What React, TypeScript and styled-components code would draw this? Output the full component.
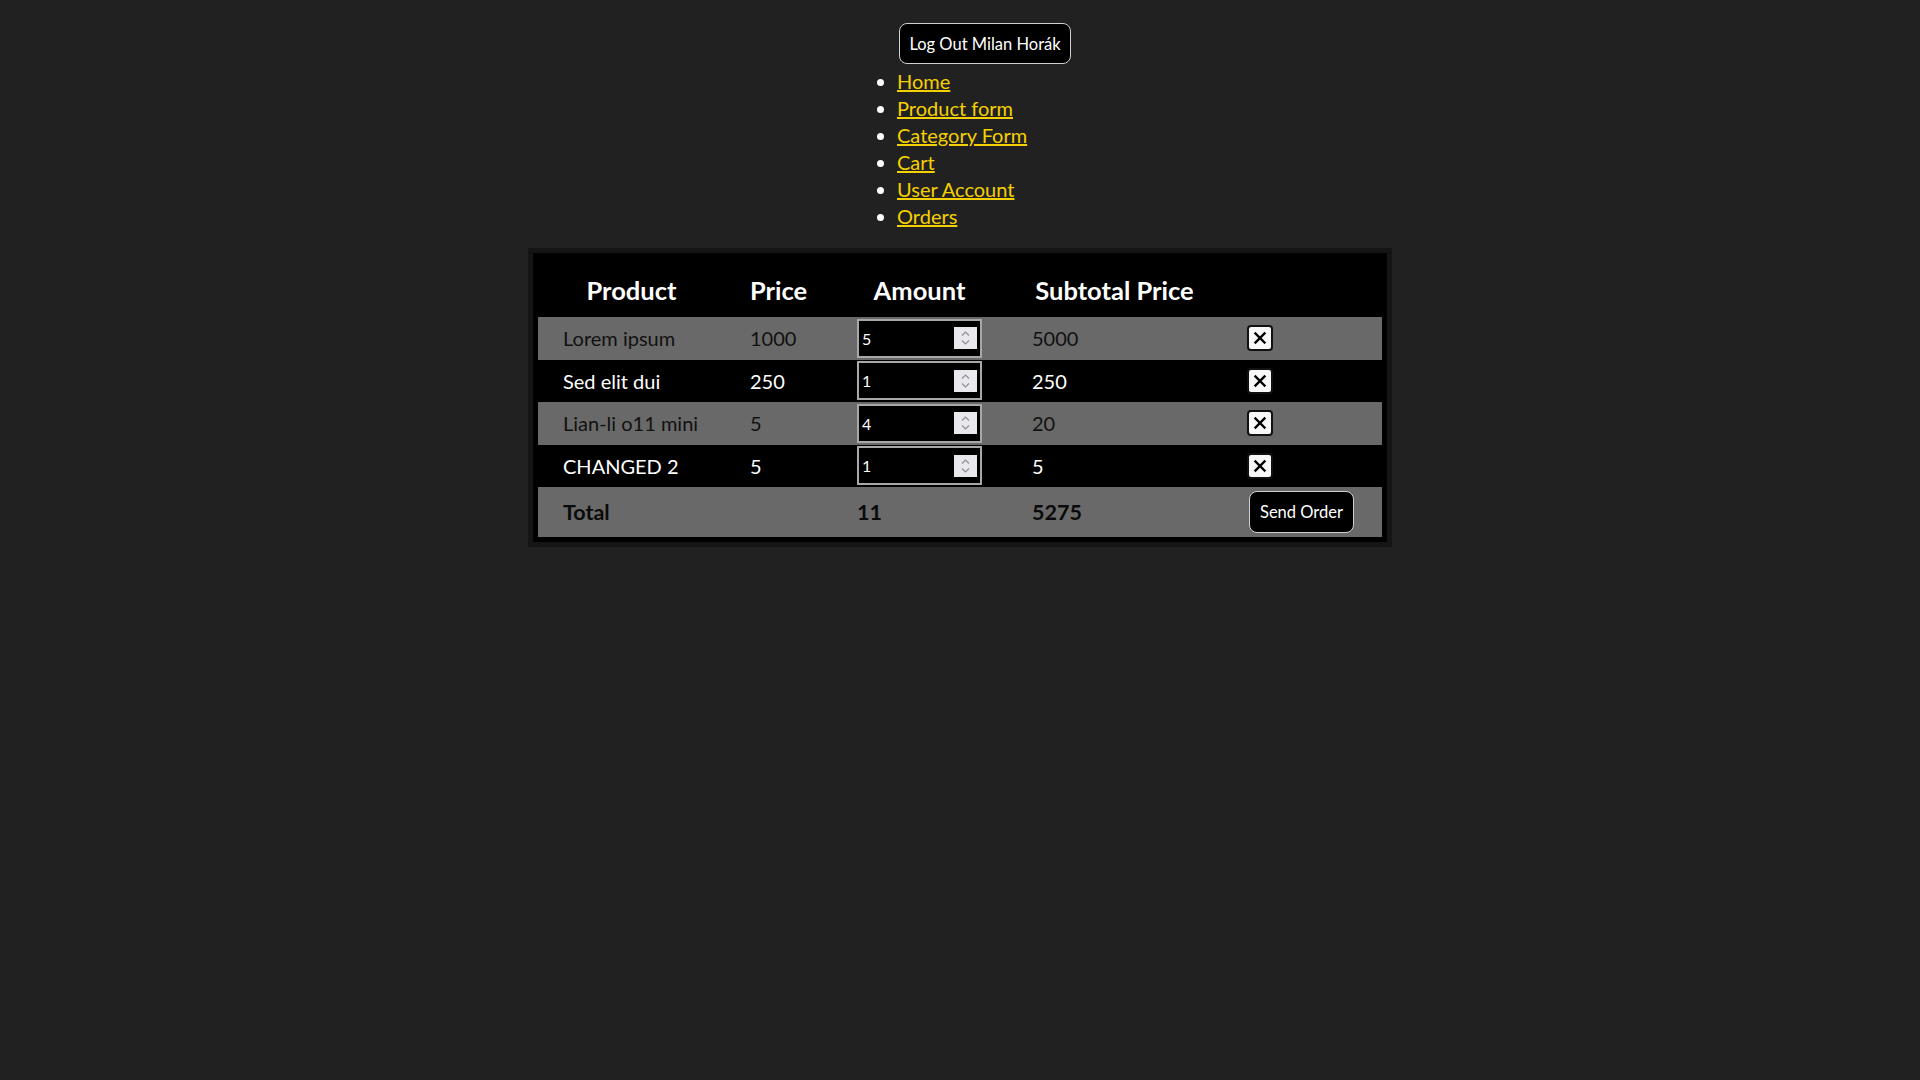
import React, { useState } from 'react'
import styled, { createGlobalStyle } from 'styled-components'

const GlobalStyle = createGlobalStyle`
body {
  margin: 0;
  background: #212121;
  color: #fff;
  font-family: Lato, "Open Sans", "Liberation Sans", sans-serif;
}
`

type Item = { id: number; name: string; price: number; amount: number }

const initialItems: Item[] = [
    { id: 1, name: 'Lorem ipsum', price: 1000, amount: 5 },
    { id: 2, name: 'Sed elit dui', price: 250, amount: 1 },
    { id: 3, name: 'Lian-li o11 mini', price: 5, amount: 4 },
    { id: 4, name: 'CHANGED 2', price: 5, amount: 1 },
]

export default function App() {
    const [items, setItems] = useState<Item[]>(initialItems)

    const setAmount = (id: number, value: number) =>
        setItems(list => list.map(i => (i.id === id ? { ...i, amount: value } : i)))
    const removeItem = (id: number) => setItems(list => list.filter(i => i.id !== id))

    const totalAmount = items.reduce((s, i) => s + i.amount, 0)
    const totalPrice = items.reduce((s, i) => s + i.amount * i.price, 0)

    return (
        <>
            <GlobalStyle />
            <Nav>
                <LogoutButton>Log Out Milan Horák</LogoutButton>
                <NavList>
                    <li><NavLink href="#">Home</NavLink></li>
                    <li><NavLink href="#">Product form</NavLink></li>
                    <li><NavLink href="#">Category Form</NavLink></li>
                    <li><NavLink href="#">Cart</NavLink></li>
                    <li><NavLink href="#">User Account</NavLink></li>
                    <li><NavLink href="#">Orders</NavLink></li>
                </NavList>
            </Nav>

            <CartFrame>
                <HeadRow>
                    <HeadCell>Product</HeadCell>
                    <HeadCell>Price</HeadCell>
                    <HeadCell>Amount</HeadCell>
                    <HeadCell>Subtotal Price</HeadCell>
                    <HeadCell />
                </HeadRow>
                {items.map((item, idx) => (
                    <Row key={item.id} $gray={idx % 2 === 0}>
                        <Cell>{item.name}</Cell>
                        <Cell>{item.price}</Cell>
                        <Cell>
                            <AmountBox>
                                <AmountInput
                                    type="number"
                                    min={1}
                                    value={item.amount}
                                    onChange={e => setAmount(item.id, Number(e.target.value))}
                                />
                                <Spinner>
                                    <svg width="23" height="22" viewBox="0 0 23 22">
                                        <path d="M8 8.5 L11.5 5 L15 8.5" fill="none" stroke="#8f8f99" strokeWidth="1.2" />
                                        <path d="M8 13.5 L11.5 17 L15 13.5" fill="none" stroke="#8f8f99" strokeWidth="1.2" />
                                    </svg>
                                </Spinner>
                            </AmountBox>
                        </Cell>
                        <Cell>{item.price * item.amount}</Cell>
                        <Cell>
                            <RemoveButton onClick={() => removeItem(item.id)} aria-label="remove">
                                <svg width="14" height="14" viewBox="0 0 14 14">
                                    <path d="M2.5 2.5 L11.5 11.5 M11.5 2.5 L2.5 11.5" stroke="#000" strokeWidth="2.4" strokeLinecap="square" />
                                </svg>
                            </RemoveButton>
                        </Cell>
                    </Row>
                ))}
                <TotalRow>
                    <TotalCell>Total</TotalCell>
                    <TotalCell />
                    <TotalCell>{totalAmount}</TotalCell>
                    <TotalCell>{totalPrice}</TotalCell>
                    <Cell>
                        <SendButton>Send Order</SendButton>
                    </Cell>
                </TotalRow>
            </CartFrame>
        </>
    )
}

const Nav = styled.nav`
display: flex;
flex-direction: column;
align-items: flex-start;
width: 130px;
margin: 0 auto;
padding-top: 23px;
`

const LogoutButton = styled.button`
margin-left: 4px;
height: 41px;
width: 172px;
padding: 0;
background: #000;
color: #fff;
border: 1px solid #d0d0d0;
border-radius: 8px;
font-family: inherit;
font-size: 16.5px;
white-space: nowrap;
cursor: pointer;
`

const NavList = styled.ul`
margin: 4px 0 18px;
padding-left: 2px;
list-style: disc outside;
font-size: 20px;
line-height: 27px;
white-space: nowrap;
color: #fff;
`

const NavLink = styled.a`
color: #f5d000;
text-decoration: underline;
`

const columns = '187px 107px 175px 215px 160px'

const CartFrame = styled.div`
box-sizing: border-box;
width: 864px;
margin: 0 auto;
border: 5px solid #151515;
background: #000;
padding: 0 5px 5px;
`

const HeadRow = styled.div`
display: grid;
grid-template-columns: ${columns};
height: 64px;
align-items: end;
`

const HeadCell = styled.div`
text-align: center;
font-size: 25.5px;
font-weight: 700;
line-height: 32px;
padding-bottom: 11px;
color: #fff;
white-space: nowrap;
`

const Row = styled.div<{ $gray: boolean }>`
display: grid;
grid-template-columns: ${columns};
height: 42.5px;
align-items: center;
background: ${({ $gray }) => ($gray ? '#696969' : '#000')};
color: ${({ $gray }) => ($gray ? '#111' : '#fff')};
`

const Cell = styled.div`
padding-left: 25px;
font-size: 20px;
display: flex;
align-items: center;
`

const TotalRow = styled(Row).attrs({ $gray: true })`
height: 50px;
`

const TotalCell = styled(Cell)`
font-weight: 700;
font-size: 21.5px;
color: #0a0a0a;
`

const AmountBox = styled.div`
box-sizing: border-box;
display: flex;
align-items: center;
width: 125px;
height: 39px;
border: 2px solid #a8a8a8;
background: #000;
padding-right: 3px;
`

const AmountInput = styled.input`
flex: 1;
min-width: 0;
height: 100%;
padding: 0 0 0 3px;
border: none;
outline: none;
background: transparent;
color: #fff;
font-family: inherit;
font-size: 16px;
-moz-appearance: textfield;
&::-webkit-inner-spin-button,
&::-webkit-outer-spin-button {
  -webkit-appearance: none;
  margin: 0;
}
`

const Spinner = styled.div`
display: flex;
width: 23px;
height: 22px;
background: #e9e9ed;
`

const RemoveButton = styled.button`
box-sizing: border-box;
display: flex;
align-items: center;
justify-content: center;
width: 26px;
height: 26px;
padding: 0;
background: #f8f8f8;
border: 2px solid #111;
border-radius: 4px;
cursor: pointer;
`

const SendButton = styled.button`
width: 105px;
height: 42px;
margin-left: 2px;
padding: 0;
background: #000;
color: #fff;
border: 1px solid #d0d0d0;
border-radius: 8px;
font-family: inherit;
font-size: 16.5px;
cursor: pointer;
`
